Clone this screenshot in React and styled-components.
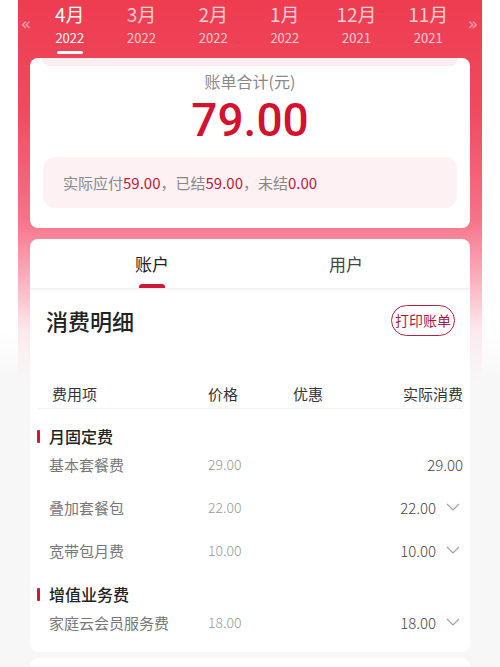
import React from 'react';
import styled, { createGlobalStyle } from 'styled-components';

const GlobalStyle = createGlobalStyle`
  body {
    margin: 0;
    background: #f7f7f7;
    font-family: "Noto Sans CJK SC", "Noto Sans", sans-serif;
  }
`

const Page = styled.div`
  width: 500px;
  height: 667px;
  overflow: hidden;
  background: linear-gradient(180deg, #ffffff 0, #ffffff 330px, #f7f7f7 380px);
`

const Panel = styled.div`
  margin: 0 18px;
  padding: 0 12px;
  background: linear-gradient(180deg, #ee3c50 0, #f04a5f 110px, #f6738a 220px, #fbb6c3 285px, #fde9ed 330px, #f7f7f7 380px);
`

const MonthBar = styled.div`
  display: flex;
  align-items: center;
  height: 58px;
  margin: 0 -12px;
`

const Arrow = styled.div`
  width: ${p => p.w}px;
  text-align: center;
  color: rgba(255, 255, 255, 0.5);
  font-size: 17px;
  font-family: "DejaVu Sans", sans-serif;
  padding-bottom: 10px;
`

const Month = styled.div`
  flex: 1;
  display: flex;
  flex-direction: column;
  align-items: center;
  color: ${p => (p.active ? '#fff' : 'rgba(255,255,255,0.75)')};
  height: 58px;
`

const MonthName = styled.div`
  font-size: 19px;
  line-height: 22px;
  margin-top: 3px;
`

const Year = styled.div`
  font-size: 13px;
  line-height: 18px;
  margin-top: 4px;
`

const Underline = styled.div`
  width: 26px;
  height: 3px;
  border-radius: 2px;
  background: #fff;
  margin-top: 4px;
`

const Card = styled.div`
  background: #fff;
  border-radius: 8px;
  overflow: hidden;
  margin-bottom: ${p => p.mb || 0}px;
`

const PeekStrip = styled.div`
  height: 8px;
  margin: 0 12px;
  background: #fbeef1;
  border-radius: 0 0 10px 10px;
`

const TotalLabel = styled.div`
  text-align: center;
  color: #888;
  font-size: 16px;
  line-height: 20px;
  margin-top: 5px;
`

const TotalValue = styled.div`
  text-align: center;
  color: #d2122f;
  font-family: Roboto, "Noto Sans", sans-serif;
  font-size: 46px;
  line-height: 52px;
  font-weight: 500;
  margin-top: 3px;
`

const SummaryBox = styled.div`
  margin: 11px 13px 20px;
  height: 51px;
  display: flex;
  align-items: center;
  padding-left: 20px;
  border-radius: 12px;
  background: #fdf1f3;
  color: #888;
  font-size: 15px;
`

const Red = styled.span`
  color: #bd1535;
`

const Tabs = styled.div`
  display: flex;
  height: 49px;
  padding: 0 27px 0 25px;
  box-shadow: 0 2px 3px rgba(0, 0, 0, 0.04);
  border-bottom: 1px solid #f2f2f2;
`

const Tab = styled.div`
  flex: 1;
  display: flex;
  flex-direction: column;
  align-items: center;
  justify-content: flex-end;
  font-size: 17px;
  color: ${p => (p.active ? '#222' : '#444')};
`

const TabText = styled.div`
  line-height: 24px;
  margin-bottom: 8px;
`

const TabLine = styled.div`
  width: 26px;
  height: 4px;
  border-radius: 3px 3px 0 0;
  background: ${p => (p.active ? '#d0163a' : 'transparent')};
`

const DetailHeader = styled.div`
  display: flex;
  align-items: center;
  justify-content: space-between;
  padding: 15px 15px 0 16px;
  height: 32px;
`

const DetailTitle = styled.div`
  font-size: 22px;
  font-weight: 500;
  color: #222;
`

const PrintButton = styled.div`
  height: 29px;
  padding: 0 3px;
  border: 1.5px solid #b3223f;
  border-radius: 16px;
  display: flex;
  align-items: center;
  color: #a61d3c;
  font-size: 14px;
`

const Table = styled.div`
  padding: 42px 7px 16px;
`

const Grid = styled.div`
  display: grid;
  grid-template-columns: 171px 85px 1fr auto;
  align-items: center;
`

const HeadRow = styled(Grid)`
  height: 30px;
  border-bottom: 1px solid #f1f1f1;
  font-size: 15px;
  color: #333;
`

const HeadCell = styled.div`
  padding-left: ${p => p.pl || 0}px;
  text-align: ${p => p.align || 'left'};
`

const Sections = styled.div`
  display: flex;
  flex-direction: column;
  gap: 16px;
  padding-top: 13px;
`

const Section = styled.div`
  display: flex;
  flex-direction: column;
`

const SectionTitle = styled.div`
  height: 28px;
  display: flex;
  align-items: center;
  gap: 9px;
  font-size: 16px;
  font-weight: 500;
  color: #222;
`

const Mark = styled.div`
  width: 3px;
  height: 13px;
  background: #d0163a;
  border-radius: 1px;
`

const Rows = styled.div`
  display: flex;
  flex-direction: column;
  gap: 15px;
`

const Row = styled(Grid)`
  height: 28px;
`

const ItemName = styled.div`
  padding-left: 12px;
  font-size: 15px;
  color: #777;
`

const Price = styled.div`
  font-size: 14px;
  color: #999;
  font-weight: 300;
`

const Actual = styled.div`
  grid-column: 4;
  display: flex;
  align-items: center;
  justify-content: flex-end;
  font-size: 15px;
  font-weight: 300;
  color: #444;
`

const Chevron = styled.svg`
  width: 14px;
  height: 8px;
  margin: 0 3px 0 10px;
`

const NextCard = styled.div`
  height: 20px;
  margin-top: 6px;
  background: #fff;
  border-radius: 8px;
`

const months = [
  ['4月', '2022'],
  ['3月', '2022'],
  ['2月', '2022'],
  ['1月', '2022'],
  ['12月', '2021'],
  ['11月', '2021'],
]

const sections = [
  {
    title: '月固定费',
    rows: [
      { name: '基本套餐费', price: '29.00', actual: '29.00' },
      { name: '叠加套餐包', price: '22.00', actual: '22.00', more: true },
      { name: '宽带包月费', price: '10.00', actual: '10.00', more: true },
    ],
  },
  {
    title: '增值业务费',
    rows: [
      { name: '家庭云会员服务费', price: '18.00', actual: '18.00', more: true },
    ],
  },
]

export default function App() {
  return (
    <Page>
      <GlobalStyle />
      <Panel>
        <MonthBar>
          <Arrow w={16}>«</Arrow>
          {months.map(([m, y], i) => (
            <Month key={m} active={i === 0}>
              <MonthName>{m}</MonthName>
              <Year>{y}</Year>
              {i === 0 && <Underline />}
            </Month>
          ))}
          <Arrow w={18}>»</Arrow>
        </MonthBar>

        <Card mb={11}>
          <PeekStrip />
          <TotalLabel>账单合计(元)</TotalLabel>
          <TotalValue>79.00</TotalValue>
          <SummaryBox>
            实际应付<Red>59.00</Red>，已结<Red>59.00</Red>，未结<Red>0.00</Red>
          </SummaryBox>
        </Card>

        <Card>
          <Tabs>
            <Tab active>
              <TabText>账户</TabText>
              <TabLine active />
            </Tab>
            <Tab>
              <TabText>用户</TabText>
              <TabLine />
            </Tab>
          </Tabs>
          <DetailHeader>
            <DetailTitle>消费明细</DetailTitle>
            <PrintButton>打印账单</PrintButton>
          </DetailHeader>
          <Table>
            <HeadRow>
              <HeadCell pl={15}>费用项</HeadCell>
              <HeadCell>价格</HeadCell>
              <HeadCell>优惠</HeadCell>
              <HeadCell align="right">实际消费</HeadCell>
            </HeadRow>
            <Sections>
              {sections.map(s => (
                <Section key={s.title}>
                  <SectionTitle>
                    <Mark />
                    {s.title}
                  </SectionTitle>
                  <Rows>
                    {s.rows.map(r => (
                      <Row key={r.name}>
                        <ItemName>{r.name}</ItemName>
                        <Price>{r.price}</Price>
                        <Actual>
                          {r.actual}
                          {r.more && (
                            <Chevron viewBox="0 0 14 8">
                              <polyline points="1,1 7,7 13,1" fill="none" stroke="#a0a0a0" strokeWidth="1.1" />
                            </Chevron>
                          )}
                        </Actual>
                      </Row>
                    ))}
                  </Rows>
                </Section>
              ))}
            </Sections>
          </Table>
        </Card>
        <NextCard />
      </Panel>
    </Page>
  );
}
